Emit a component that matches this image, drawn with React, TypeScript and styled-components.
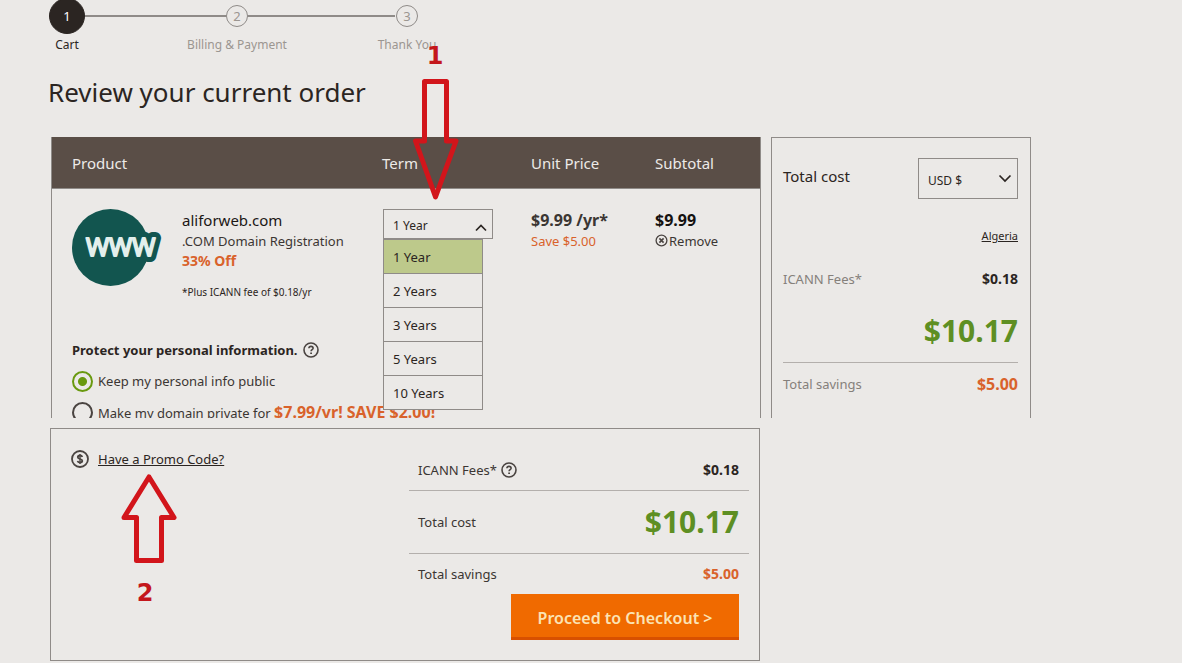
import React, { useState } from 'react';
import styled, { createGlobalStyle, css } from 'styled-components';

const color = {
  page: '#ebe9e7',
  ink: '#2b2522',
  text: '#3b3633',
  muted: '#85807b',
  line: '#8f8b88',
  rule: '#b3afac',
  header: '#5a4e47',
  orange: '#d9622b',
  green: '#5e8f23',
  red: '#d2151b',
  teal: '#12554f',
};

const GlobalStyle = createGlobalStyle`
  * { box-sizing: border-box; }
  body {
    margin: 0;
    background: ${color.page};
    color: ${color.text};
    font: 13px/20px "Noto Sans", "Open Sans", sans-serif;
  }
  button, select, input { font: inherit; color: inherit; margin: 0; }
`;

const Page = styled.main`
  position: relative;
  max-width: 1031px;
  padding-left: 50px;
  overflow: hidden;
`;

const Steps = styled.ol`
  display: flex;
  justify-content: space-between;
  max-width: 376px;
  margin: -2px 0 0 -1px;
  padding: 0;
  list-style: none;
  background: linear-gradient(${color.line}, ${color.line}) 0 17px / calc(100% - 30px) 2px no-repeat;
`;

const Step = styled.li<{ $current?: boolean }>`
  display: flex;
  flex-direction: column;
  align-items: center;
  width: 36px;
  font-size: 12px;
  white-space: nowrap;
  color: ${(p) => (p.$current ? color.ink : '#9b9691')};
`;

const Marker = styled.span<{ $current?: boolean }>`
  display: grid;
  place-items: center;
  width: 22px;
  height: 22px;
  margin: 7px 0 8px;
  border: 1px solid ${color.line};
  border-radius: 50%;
  background: ${color.page};
  font-size: 13px;
  ${(p) =>
    p.$current &&
    css`
      width: 36px;
      height: 36px;
      margin: 0 0 1px;
      border-color: ${color.ink};
      background: ${color.ink};
      color: #fff;
    `}
`;

const Title = styled.h1`
  margin: 19px 0 27px -2px;
  font-size: 26px;
  line-height: 36px;
  font-weight: 400;
  color: ${color.ink};
`;

const OrderRow = styled.div`
  display: flex;
  gap: 10px;
  max-height: 281px;
  margin-left: 1px;
`;

const OrderCard = styled.section`
  flex: 1;
  min-width: 0;
  overflow: hidden;
  border: solid ${color.line};
  border-width: 0 1px;
`;

const OrderTable = styled.table`
  width: 100%;
  table-layout: fixed;
  border-collapse: collapse;
  text-align: left;
`;

const Col = styled.col<{ $width?: number }>`
  width: ${(p) => (p.$width ? `${p.$width}px` : 'auto')};
`;

const HeadCell = styled.th`
  height: 51px;
  padding: 2px 0 0;
  border-bottom: 1px solid ${color.line};
  background: ${color.header};
  color: #edeae7;
  font-size: 15px;
  font-weight: 400;
  &:first-child { padding-left: 20px; }
`;

const Cell = styled.td`
  padding: 20px 0 0;
  vertical-align: top;
  &:first-child { padding-left: 20px; }
`;

const Product = styled.div`
  display: flex;
  gap: 20px;
`;

const Name = styled.div`
  font-size: 15px;
  line-height: 22px;
  color: #1b1715;
`;

const Note = styled.div`
  margin-top: 11px;
  font-size: 10px;
  color: ${color.ink};
`;

const Accent = styled.strong`
  font-size: 14px;
  color: ${color.orange};
`;

const UnitPrice = styled.div`
  font-size: 16px;
  line-height: 22px;
  font-weight: 700;
`;

const Saving = styled.div`
  font-size: 13px;
  color: ${color.orange};
`;

const Subtotal = styled(UnitPrice)`
  color: #151210;
`;

const RemoveButton = styled.button`
  display: flex;
  align-items: center;
  gap: 1px;
  padding: 0;
  border: 0;
  background: none;
  cursor: pointer;
`;

const SelectWrap = styled.div`
  position: relative;
  display: flex;
  align-items: center;
  color: ${color.ink};
`;

const TermPicker = styled(SelectWrap)`
  width: 110px;
  height: 30px;
  margin-left: 1px;
  font-size: 12px;
`;

const Select = styled.select`
  appearance: none;
  width: 100%;
  height: 100%;
  padding: 4px 9px 0;
  border: 1px solid ${color.line};
  border-radius: 0;
  background: transparent;
`;

const Chevron = styled.svg`
  position: absolute;
  right: 6px;
  pointer-events: none;
  fill: none;
  stroke: ${color.ink};
  stroke-width: 1.7;
`;

const TermChevron = styled(Chevron)`
  top: 15px;
`;

const TermMenu = styled.ul`
  position: absolute;
  z-index: 1;
  top: 30px;
  left: 0;
  width: 100px;
  margin: 0;
  padding: 0;
  list-style: none;
  border: 1px solid ${color.line};
  background: ${color.page};
`;

const TermOption = styled.button<{ $selected: boolean }>`
  display: block;
  width: 100%;
  height: 34px;
  padding: 2px 9px 0;
  border: 0;
  border-bottom: 1px solid ${color.line};
  background: ${(p) => (p.$selected ? '#bdc98b' : 'transparent')};
  text-align: left;
  font-size: 13px;
  li:last-child > & {
    height: 33px;
    border-bottom: 0;
  }
`;

const Privacy = styled.fieldset`
  min-width: 0;
  margin: 38px 0 0;
  padding: 0 0 0 20px;
  border: 0;
`;

const Legend = styled.legend`
  display: flex;
  align-items: center;
  gap: 5px;
  padding: 0;
  margin-bottom: 6px;
  font-weight: 700;
  color: ${color.ink};
`;

const Choice = styled.label`
  display: flex;
  align-items: center;
  gap: 5px;
  height: 31px;
  white-space: pre;
`;

const Radio = styled.input`
  appearance: none;
  width: 21px;
  height: 21px;
  border: 2px solid #4a4441;
  border-radius: 50%;
  &:checked {
    border-color: #69990f;
    background: radial-gradient(circle, #69990f 4px, transparent 5px);
  }
`;

const Deal = styled(Accent)`
  font-size: 16px;
`;

const CostCard = styled.aside`
  flex: none;
  width: 260px;
  overflow: hidden;
  padding: 20px 12px 0 11px;
  border: 1px solid ${color.line};
  border-bottom: 0;
`;

const Line = styled.div<{ $height: number; $rule?: boolean; $inset?: boolean }>`
  display: flex;
  align-items: center;
  justify-content: space-between;
  min-height: ${(p) => p.$height}px;
  padding: ${(p) => (p.$inset ? '0 10px 0 9px' : '0')};
  border-bottom: ${(p) => (p.$rule ? `1px solid ${color.rule}` : '0')};
`;

const CostTitle = styled.label`
  padding-bottom: 6px;
  font-size: 15px;
  color: ${color.ink};
`;

const CurrencySelect = styled(SelectWrap)`
  width: 100px;
  height: 41px;
  font-size: 12px;
`;

const Country = styled.a`
  margin: 27px 0 23px;
  display: block;
  text-align: right;
  font-size: 11px;
  color: ${color.ink};
`;

const Label = styled.span<{ $muted?: boolean }>`
  display: flex;
  align-items: center;
  gap: 4px;
  color: ${(p) => (p.$muted ? color.muted : color.text)};
`;

const Amount = styled.strong<{ $tone?: 'saving' | 'total'; $large?: boolean }>`
  font-size: ${(p) => (p.$large ? 16 : 14)}px;
  color: ${(p) => (p.$tone === 'saving' ? color.orange : p.$tone === 'total' ? color.green : color.ink)};
  ${(p) => p.$tone === 'total' && 'font-size: 30px; line-height: 36px;'}
`;

const CostTotal = styled(Line)`
  padding-top: 10px;
  justify-content: flex-end;
`;

const CheckoutCard = styled.section`
  display: flex;
  justify-content: space-between;
  max-width: 710px;
  margin-top: 10px;
  padding: 20px 10px 20px 20px;
  border: 1px solid ${color.line};
`;

const Promo = styled.div`
  display: flex;
  align-items: center;
  align-self: flex-start;
  gap: 9px;
`;

const PromoLink = styled.a`
  color: ${color.ink};
`;

const Summary = styled.div`
  display: flex;
  flex-direction: column;
  width: 340px;
`;

const Checkout = styled.button`
  align-self: flex-end;
  width: 228px;
  height: 46px;
  margin-right: 10px;
  padding: 4px 0 0;
  border: 0;
  border-bottom: 3px solid #d85000;
  background: #f06a00;
  color: #fbe3b4;
  font-size: 16px;
  font-weight: 600;
  cursor: pointer;
`;

const Annotation = styled.svg`
  position: absolute;
  z-index: 2;
  pointer-events: none;
  overflow: visible;
  fill: none;
  stroke: ${color.red};
  stroke-width: 5;
  stroke-linejoin: round;
  text {
    fill: #c4171c;
    stroke: none;
    font: 700 24px "DejaVu Sans", sans-serif;
    text-anchor: middle;
  }
`;

const TermArrow = styled(Annotation)`
  left: 412px;
  top: 40px;
`;

const PromoArrow = styled(Annotation)`
  left: 120px;
  top: 472px;
`;

const WwwLogo = () => (
  <svg width="90" height="77" viewBox="0 0 90 77" aria-label="www" role="img">
    <circle cx="38.5" cy="38.5" r="38.5" fill={color.teal} />
    <g fontFamily="Open Sans, sans-serif" fontSize="25" fontWeight="400" strokeLinejoin="round">
      <text x="14" y="47" fill={color.teal} stroke={color.teal} strokeWidth="12">WWW</text>
      <text x="14" y="47" fill="#e3efec" stroke="#e3efec" strokeWidth="2">WWW</text>
    </g>
  </svg>
);

const HelpIcon = () => (
  <svg width="16" height="16" viewBox="0 0 16 16" fill="none" stroke="#4a4441" role="img" aria-label="Help">
    <circle cx="8" cy="8" r="7" strokeWidth="1.6" />
    <path d="M5.9 6.3C6 5 6.9 4.4 8 4.4s2.1.6 2.1 1.8c0 1.5-2 1.5-2 3.1" strokeWidth="1.6" />
    <path d="M8.1 10.4v1.7" strokeWidth="1.8" />
  </svg>
);

const CloseIcon = () => (
  <svg width="13" height="13" viewBox="0 0 13 13" fill="none" stroke="#4a4441" aria-hidden="true">
    <circle cx="6.5" cy="6.5" r="5.4" strokeWidth="1.3" />
    <path d="M4.4 4.4l4.2 4.2M8.6 4.4L4.4 8.6" strokeWidth="1.6" />
  </svg>
);

const DollarIcon = () => (
  <svg width="18" height="18" viewBox="0 0 18 18" fill="none" stroke="#4a4441" aria-hidden="true">
    <circle cx="9" cy="9" r="8" strokeWidth="1.8" />
    <path d="M11.3 6.9C11 5.9 10.2 5.5 9 5.5c-1.3 0-2.2.6-2.2 1.7 0 2.4 4.5 1.2 4.5 3.6 0 1.1-1 1.7-2.3 1.7-1.4 0-2.2-.6-2.4-1.7" strokeWidth="1.8" />
    <path d="M9 4v10" strokeWidth="1.4" />
  </svg>
);

const terms = ['1 Year', '2 Years', '3 Years', '5 Years', '10 Years'];

export default function App() {
  const [term, setTerm] = useState(terms[0]);
  const [open, setOpen] = useState(true);

  return (
    <>
      <GlobalStyle />
      <Page>
        <Steps>
          <Step $current aria-current="step"><Marker $current>1</Marker>Cart</Step>
          <Step><Marker>2</Marker>Billing &amp; Payment</Step>
          <Step><Marker>3</Marker>Thank You</Step>
        </Steps>
        <Title>Review your current order</Title>

        <OrderRow>
          <OrderCard>
            <OrderTable>
              <colgroup>
                <Col />
                <Col $width={149} />
                <Col $width={124} />
                <Col $width={105} />
              </colgroup>
              <thead>
                <tr>
                  <HeadCell scope="col">Product</HeadCell>
                  <HeadCell scope="col">Term</HeadCell>
                  <HeadCell scope="col">Unit Price</HeadCell>
                  <HeadCell scope="col">Subtotal</HeadCell>
                </tr>
              </thead>
              <tbody>
                <tr>
                  <Cell>
                    <Product>
                      <WwwLogo />
                      <div>
                        <Name>aliforweb.com</Name>
                        <div>.COM Domain Registration</div>
                        <Accent>33% Off</Accent>
                        <Note>*Plus ICANN fee of $0.18/yr</Note>
                      </div>
                    </Product>
                  </Cell>
                  <Cell>
                    <TermPicker>
                      <Select
                        aria-label="Term"
                        value={term}
                        onChange={(e) => setTerm(e.target.value)}
                        onMouseDown={(e) => { e.preventDefault(); setOpen(!open); }}
                      >
                        {terms.map((t) => <option key={t}>{t}</option>)}
                      </Select>
                      <TermChevron width="12" height="8" viewBox="0 0 12 8" aria-hidden="true">
                        <path d="M1 6.5l5-5 5 5" />
                      </TermChevron>
                      {open && (
                        <TermMenu>
                          {terms.map((t) => (
                            <li key={t}>
                              <TermOption type="button" $selected={t === term} onClick={() => { setTerm(t); setOpen(false); }}>
                                {t}
                              </TermOption>
                            </li>
                          ))}
                        </TermMenu>
                      )}
                    </TermPicker>
                  </Cell>
                  <Cell>
                    <UnitPrice>$9.99 /yr*</UnitPrice>
                    <Saving>Save $5.00</Saving>
                  </Cell>
                  <Cell>
                    <Subtotal>$9.99</Subtotal>
                    <RemoveButton type="button"><CloseIcon />Remove</RemoveButton>
                  </Cell>
                </tr>
              </tbody>
            </OrderTable>
            <Privacy>
              <Legend>Protect your personal information. <HelpIcon /></Legend>
              <Choice>
                <Radio type="radio" name="privacy" defaultChecked />
                <span>Keep my personal info public</span>
              </Choice>
              <Choice>
                <Radio type="radio" name="privacy" />
                <span>Make my domain private for <Deal>$7.99/yr! SAVE $2.00!</Deal></span>
              </Choice>
            </Privacy>
          </OrderCard>

          <CostCard>
            <Line $height={41}>
              <CostTitle htmlFor="currency">Total cost</CostTitle>
              <CurrencySelect>
                <Select id="currency"><option>USD $</option></Select>
                <Chevron width="14" height="9" viewBox="0 0 14 9" aria-hidden="true">
                  <path d="M1.5 1.5l5.5 5.5 5.5-5.5" />
                </Chevron>
              </CurrencySelect>
            </Line>
            <Country href="#country">Algeria</Country>
            <Line $height={20}><Label $muted>ICANN Fees*</Label><Amount>$0.18</Amount></Line>
            <CostTotal $height={74} $rule><Amount $tone="total">$10.17</Amount></CostTotal>
            <Line $height={42}><Label $muted>Total savings</Label><Amount $tone="saving" $large>$5.00</Amount></Line>
          </CostCard>
        </OrderRow>

        <CheckoutCard>
          <Promo><DollarIcon /><PromoLink href="#promo">Have a Promo Code?</PromoLink></Promo>
          <Summary>
            <Line $height={42} $rule $inset><Label>ICANN Fees* <HelpIcon /></Label><Amount>$0.18</Amount></Line>
            <Line $height={63} $rule $inset><Label>Total cost</Label><Amount $tone="total">$10.17</Amount></Line>
            <Line $height={40} $inset><Label>Total savings</Label><Amount $tone="saving">$5.00</Amount></Line>
            <Checkout type="button">Proceed to Checkout &gt;</Checkout>
          </Summary>
        </CheckoutCard>

        <TermArrow width="48" height="162" viewBox="0 0 48 162">
          <text x="23" y="24">1</text>
          <path d="M12.5 41.5h22V101h9.5L23.5 157 3.5 101h9z" />
        </TermArrow>
        <PromoArrow width="58" height="132" viewBox="0 0 58 132">
          <path d="M29 5L54 45.5H41.5v43h-25v-43H4z" />
          <text x="25" y="129">2</text>
        </PromoArrow>
      </Page>
    </>
  );
}
